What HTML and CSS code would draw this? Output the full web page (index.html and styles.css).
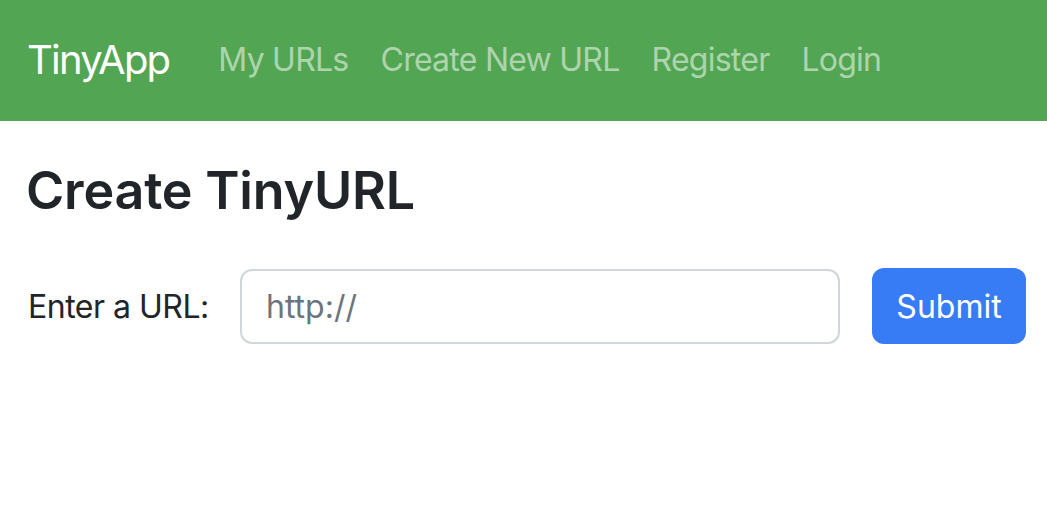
FILE: index.html
```html
<!DOCTYPE html>
<html lang="en">
<head>
<meta charset="utf-8">
<title>TinyApp</title>
<link rel="stylesheet" href="styles.css">
</head>
<body>
<nav class="navbar">
  <a class="brand" href="#">TinyApp</a>
  <ul class="nav">
    <li><a class="nav-link" href="#">My URLs</a></li>
    <li><a class="nav-link" href="#">Create New URL</a></li>
    <li><a class="nav-link" href="#">Register</a></li>
    <li><a class="nav-link" href="#">Login</a></li>
  </ul>
</nav>
<main class="container">
  <h1 class="title">Create TinyURL</h1>
  <form class="url-form">
    <label class="form-label" for="longURL">Enter a URL:</label>
    <input class="form-input" id="longURL" type="text" placeholder="http://">
    <button class="btn-primary" type="button">Submit</button>
  </form>
</main>
</body>
</html>
```
FILE: styles.css
```css
* { box-sizing: border-box; }
html, body { margin: 0; padding: 0; }
body {
  font-family: Inter, "Noto Sans", "Liberation Sans", sans-serif;
  color: #212529;
  background: #fff;
  font-size: 32px;
}
.navbar {
  display: flex;
  align-items: center;
  height: 121px;
  padding: 0 24px 2px 27px;
  background: #52a552;
}
.brand {
  font-size: 40px;
  color: #fff;
  text-decoration: none;
  margin-right: 33px;
  letter-spacing: -1.8px;
}
.nav {
  display: flex;
  list-style: none;
  margin: 0;
  padding: 0;
}
.nav-link {
  display: block;
  padding: 0 16px;
  font-size: 32px;
  color: rgba(255, 255, 255, 0.55);
  text-decoration: none;
  letter-spacing: -0.75px;
}
.container {
  padding: 0 0 0 24px;
}
.title {
  margin: 39px 0 46px 2px;
  font-size: 52px;
  font-weight: 600;
  line-height: 1.2;
  letter-spacing: -0.2px;
}
.url-form {
  display: flex;
  align-items: center;
}
.form-label {
  flex-shrink: 0;
  font-size: 32px;
  width: 216px;
  padding-left: 4px;
  letter-spacing: -0.5px;
}
.form-input {
  flex-shrink: 0;
  width: 600px;
  height: 75px;
  border: 2px solid #d2d6da;
  border-radius: 12px;
  padding: 0 24px;
  font-family: inherit;
  font-size: 32px;
  color: #212529;
}
.form-input::placeholder { color: #6c757d; }
.btn-primary {
  flex-shrink: 0;
  margin-left: 32px;
  width: 154px;
  height: 76px;
  border: none;
  border-radius: 12px;
  background: #377bf5;
  color: #fff;
  font-family: inherit;
  font-size: 32px;
}
```
